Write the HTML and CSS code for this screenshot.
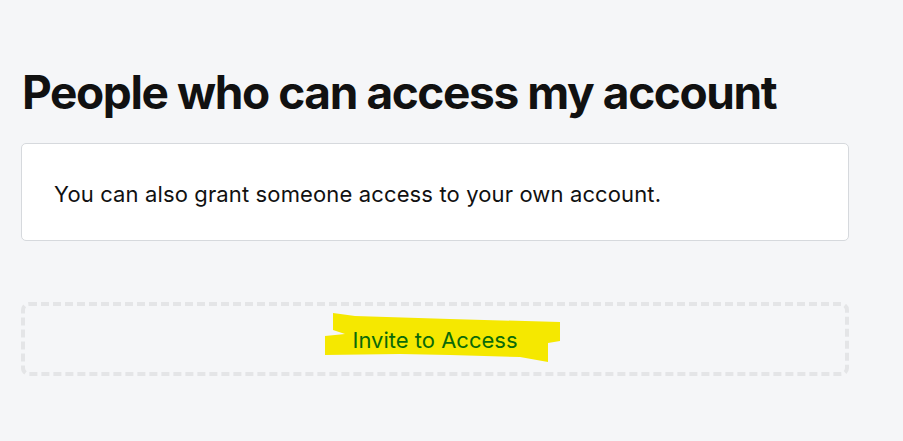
FILE: index.html
```html
<!DOCTYPE html>
<html lang="en">
<head>
<meta charset="utf-8">
<title>People who can access my account</title>
<link rel="stylesheet" href="styles.css">
</head>
<body>
<main class="page">
  <h1 class="title">People who can access my account</h1>
  <section class="card">
    <p class="card-text">You can also grant someone access to your own account.</p>
  </section>
  <div class="invite">
    <svg class="dash-border" width="828" height="74" viewBox="0 0 828 74" aria-hidden="true">
      <rect x="2" y="2" width="824" height="70" rx="6" ry="6" fill="none" stroke="#e4e5e7" stroke-width="4" stroke-dasharray="8 4"/>
    </svg>
    <svg class="marker" width="236" height="50" viewBox="0 0 236 50" aria-hidden="true">
      <polygon fill="#f5e800" points="8,0 30,3 125,6 235,9 235,28 223,30 223,49 195,44 125,42 75,41 0,42 0,23 20,21 8,17"/>
    </svg>
    <span class="invite-label">Invite to Access</span>
  </div>
</main>
</body>
</html>
```

FILE: styles.css
```css
html, body {
  margin: 0;
  padding: 0;
  background: #f5f6f8;
}
body {
  font-family: Inter, "Noto Sans", "Liberation Sans", sans-serif;
  color: #111;
}
.page {
  width: 828px;
  padding: 62px 0 0 21px;
  display: flex;
  flex-direction: column;
}
.title {
  margin: 0 0 0 1px;
  font-size: 46px;
  line-height: 60px;
  font-weight: 700;
  letter-spacing: -1.4px;
  color: #111;
}
.card {
  margin-top: 21px;
  height: 96px;
  background: #fff;
  border: 1px solid #d6d9dd;
  border-radius: 5px;
  display: flex;
  align-items: center;
  padding: 0 32px;
}
.card-text {
  margin: 4px 0 0;
  font-size: 22px;
  letter-spacing: 0.13px;
  color: #111;
}
.invite {
  position: relative;
  margin-top: 61px;
  height: 74px;
  display: flex;
  align-items: center;
  justify-content: center;
}
.dash-border {
  position: absolute;
  left: 0;
  top: 0;
}
.marker {
  position: absolute;
  left: 304px;
  top: 11px;
}
.invite-label {
  position: relative;
  margin-top: 2px;
  font-size: 22px;
  color: #0a6a08;
}
```
